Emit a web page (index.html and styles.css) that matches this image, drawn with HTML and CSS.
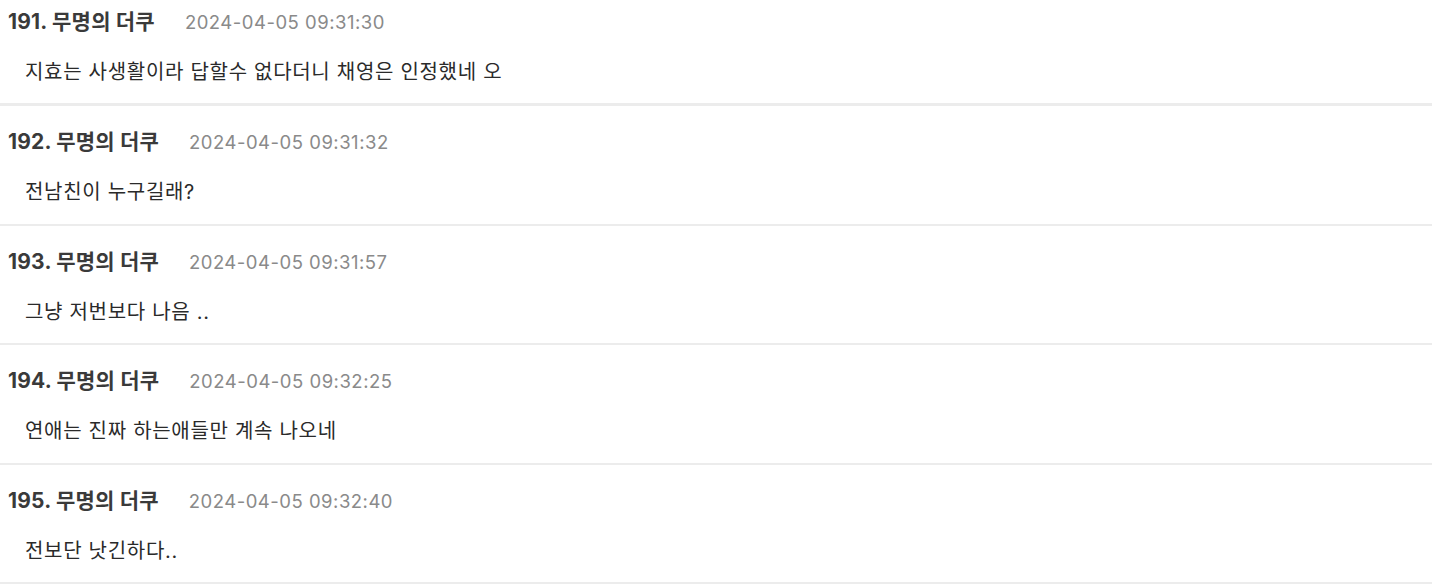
FILE: index.html
```html
<!DOCTYPE html>
<html lang="ko">
<head>
<meta charset="utf-8">
<link rel="stylesheet" href="styles.css">
</head>
<body>
<ul class="comments">
  <li class="comment">
    <div class="meta"><span class="author">191. 무명의 더쿠</span><span class="date">2024-04-05 09:31:30</span></div>
    <p class="text">지효는 사생활이라 답할수 없다더니 채영은 인정했네 오</p>
  </li>
  <li class="comment">
    <div class="meta"><span class="author">192. 무명의 더쿠</span><span class="date">2024-04-05 09:31:32</span></div>
    <p class="text">전남친이 누구길래?</p>
  </li>
  <li class="comment">
    <div class="meta"><span class="author">193. 무명의 더쿠</span><span class="date">2024-04-05 09:31:57</span></div>
    <p class="text">그냥 저번보다 나음 ..</p>
  </li>
  <li class="comment">
    <div class="meta"><span class="author">194. 무명의 더쿠</span><span class="date">2024-04-05 09:32:25</span></div>
    <p class="text">연애는 진짜 하는애들만 계속 나오네</p>
  </li>
  <li class="comment">
    <div class="meta"><span class="author">195. 무명의 더쿠</span><span class="date">2024-04-05 09:32:40</span></div>
    <p class="text">전보단 낫긴하다..</p>
  </li>
</ul>
</body>
</html>
```
FILE: styles.css
```css
html, body {
  margin: 0;
  padding: 0;
  background: #fff;
}
body {
  font-family: Inter, "Noto Sans CJK KR", sans-serif;
  color: #333;
  overflow: hidden;
}
.comments {
  list-style: none;
  margin: 0;
  padding: 0;
}
.comment {
  padding: 24px 0 19.5px;
  border-bottom: 2px solid #ececec;
}
.comment:first-child {
  padding-top: 10px;
  padding-bottom: 19px;
  border-bottom-width: 3px;
}
.meta {
  display: flex;
  align-items: baseline;
  gap: 30px;
  padding-left: 8px;
  height: 24px;
  line-height: 24px;
}
.author {
  font-size: 21px;
  font-weight: 700;
  color: #3a3a3a;
  letter-spacing: 0.2px;
}
.date {
  font-size: 18.5px;
  color: #8a8a8a;
  letter-spacing: 0.5px;
}
.text {
  margin: 26px 0 0;
  padding-left: 25px;
  font-size: 20px;
  line-height: 24px;
  color: #2a2a2a;
  letter-spacing: 0.7px;
}
```
